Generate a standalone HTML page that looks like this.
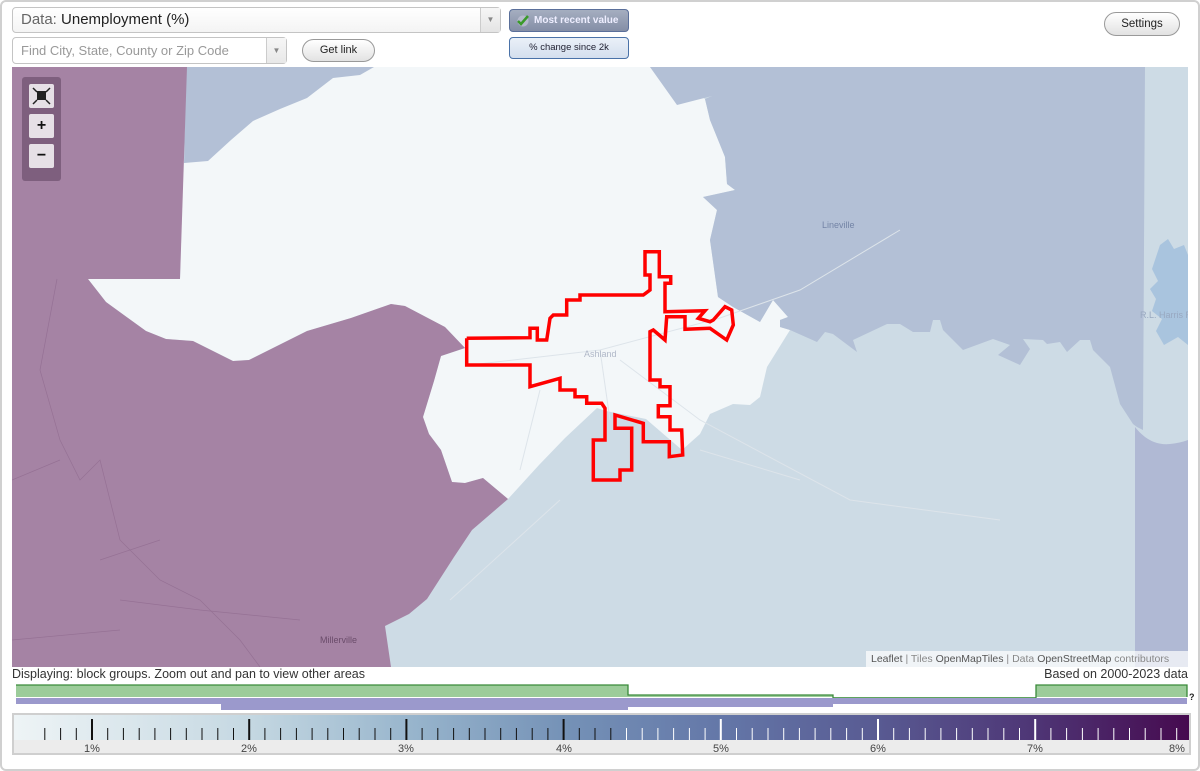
<!DOCTYPE html>
<html><head><meta charset="utf-8"><style>
*{box-sizing:border-box;margin:0;padding:0}
body{width:1200px;height:771px;background:#fff;font-family:"Liberation Sans",Arial,sans-serif;position:relative;overflow:hidden}
.frame{position:absolute;left:0;top:0;width:1200px;height:771px;border:2px solid #d0d0d0;border-radius:6px}
.sel{position:absolute;left:12px;top:7px;width:489px;height:26px;border:1px solid #c4c4c4;border-radius:4px;background:linear-gradient(#fff,#f4f4f4);font-size:15px;line-height:24px;padding-left:8px;color:#222}
.sel .l{color:#666}
.arr{position:absolute;right:0;top:0;width:20px;height:100%;border-left:1px solid #ccc;background:linear-gradient(#f6f6f6,#e4e4e4);color:#888;font-size:8px;text-align:center;line-height:24px}
.find{position:absolute;left:12px;top:37px;width:275px;height:27px;border:1px solid #c4c4c4;border-radius:4px;background:#fff;font-size:13px;color:#999;line-height:25px;padding-left:8px}
.btn{position:absolute;border:1px solid #999;border-radius:12px;background:linear-gradient(#fff,#e2e2e2);font-size:11px;text-align:center;color:#222}
.mr{position:absolute;left:509px;top:9px;width:120px;height:23px;border:1px solid #5a6f9a;border-radius:4px;background:linear-gradient(#a5aec0,#848ea6);color:#eef;font-size:10px;font-weight:bold;line-height:21px;padding-left:24px}
.pc{position:absolute;left:509px;top:37px;width:120px;height:22px;border:1px solid #4a72a8;border-radius:4px;background:linear-gradient(#eaf0f8,#d4dfee);color:#223;font-size:9.5px;line-height:20px;text-align:center}
.zp{position:absolute;left:22px;top:77px;width:39px;height:104px;background:rgba(110,80,110,.7);border-radius:3px}
.zb{position:absolute;left:7px;width:25px;height:24px;background:#e6e0e6;border-radius:2px;font-weight:bold;text-align:center;font-size:16px;line-height:23px;color:#111}
.attr{position:absolute;left:866px;top:651px;width:322px;height:16px;background:rgba(255,255,255,.7);font-size:10.5px;color:#888;line-height:16px;padding-left:5px}
.attr b{font-weight:normal;color:#555}
</style></head><body>
<div class="frame"></div>
<div class="sel"><span class="l">Data:</span> Unemployment (%)<div class="arr">▼</div></div>
<div class="find">Find City, State, County or Zip Code<div class="arr" style="background:linear-gradient(#f6f6f6,#e8e8e8);line-height:25px">▼</div></div>
<div class="btn" style="left:302px;top:39px;width:73px;height:23px;line-height:21px">Get link</div>
<div class="mr"><svg style="position:absolute;left:6px;top:4px" width="14" height="13" viewBox="0 0 14 13"><circle cx="7" cy="7" r="5.5" fill="#ccd" opacity=".6"/><path d="M2 7l3 3 7-8" stroke="#3a9a2a" stroke-width="2.5" fill="none"/></svg>Most recent value</div>
<div class="pc">% change since 2k</div>
<div class="btn" style="left:1104px;top:12px;width:76px;height:24px;line-height:22px;font-size:11.5px">Settings</div>

<svg style="position:absolute;left:12px;top:67px" width="1176" height="600" viewBox="12 67 1176 600">
<rect x="12" y="67" width="1176" height="600" fill="#cddbe5"/>
<polygon fill="#f3f7f9" points="186,67 650,67 705,99 710,120 725,157 727,184 735,190 703,197 717,210 710,240 718,297 733,307 760,322 773,300 788,317 780,320 780,327 790,330 767,367 760,397 750,405 733,404 710,414 700,434 682,450 646,419 606,411 597,408 565,438 539,465 508,499 483,478 465,483 452,482 441,450 429,434 423,417 434,381 441,356 465,348 445,327 405,306 391,304 351,318 307,331 249,360 233,361 193,341 166,339 146,331 106,302 88,279 180,279"/>
<polygon fill="#b3c0d6" points="186,67 374,67 360,75 333,78 307,98 280,109 253,121 231,140 208,161 184,163"/>
<polygon fill="#b3c0d6" points="650,67 1145,67 1143,430 1137,427 1133,424 1120,404 1110,367 1093,350 1090,340 1080,340 1067,352 1060,342 1047,344 1043,340 1023,339 1030,349 1020,365 998,355 1010,345 993,339 963,350 943,330 940,320 933,320 930,332 913,332 900,324 887,324 853,340 857,352 833,334 825,332 817,342 790,330 780,327 780,320 788,317 773,300 760,322 733,307 718,297 710,240 717,210 703,197 735,190 727,184 725,157 710,120 705,99 712,96 677,105"/>
<path d="M1135 427 Q1150 446 1170 444 Q1180 443 1188 440 V667 H1135Z" fill="#b0b9d4"/>
<path d="M1160 245 l8 -6 6 10 10 -4 4 10 v90 l-10 -8 -14 8 -8 -14 6 -12 -10 -8 4 -12 -6 -10 8 -8 -6 -12z" fill="#a9c4de"/>
<polygon fill="#a583a4" points="12,67 187,67 180,279 12,279"/>
<polygon fill="#a583a4" points="12,279 88,279 106,302 146,331 166,339 193,341 233,361 249,360 307,331 351,318 391,304 405,306 445,327 465,348 441,356 434,381 423,417 429,434 441,450 452,482 465,483 483,478 508,499 472,530 454,557 427,599 409,614 385,626 391,667 12,667"/>
<g stroke="#8f6a8e" stroke-width=".7" fill="none" opacity=".7">
<path d="M57 279 L40 370 60 440 80 480 100 460 120 540 160 580 200 600 240 640 260 667"/>
<path d="M12 480 L60 460 M100 560 L160 540 M120 600 L200 610 L300 620 M12 640 L120 630"/>
</g>
<g stroke="#dde4ea" stroke-width="1" fill="none">
<path d="M470 365 L600 350 720 318 800 290 900 230 M600 350 L610 420 M540 390 L520 470"/>
<path d="M620 360 L700 420 850 500 1000 520 M700 450 L800 480 M560 500 L450 600"/>
</g>
<polyline fill="none" stroke="#ff0000" stroke-width="3.5" points="466.7,338.3 530,337.7 530,328.3 537.3,328.3 537.3,340 546.7,340 550,318.3 553.3,315 566.7,315 566.7,300 580,300 580,295 643.3,295 650,290 650,275 645,275 645,251.7 659.3,251.7 659.3,276.7 670.7,276.7 670.7,283.3 665,283.3 665,311.7 705,310.7 698.3,318.3 710,321.7 713.3,320 725,306.7 731.7,310 733.3,325 726.7,340 710,328.3 685,329.3 685,316.7 666.7,316.7 665,340 653.3,330 650,331.7 650,380 660,380 660,386.7 670,386.7 670,405.7 658.3,405.7 658.3,416.7 670,416.7 670,430 681.7,430 682.7,455 669.3,456.7 669.3,441.7 643.3,441.7 643.3,423.3 615,415 615,428.3 631.7,428.3 631.7,470 620,470 620,480 593.3,480 593.3,440 605,440 605,408.3 601.7,403.3 586.7,403.3 586.7,396.7 575,396.7 575,390 560,390 560,378.3 530,386.7 530,365 466.7,365 466.7,338.3"/>
<g font-family="Liberation Sans,sans-serif" font-size="9">
<text x="584" y="357" fill="#b0b8c8">Ashland</text>
<text x="822" y="228" fill="#7484a6">Lineville</text>
<text x="320" y="643" fill="#6a4c6a">Millerville</text>
<text x="1140" y="318" fill="#98a8c0">R.L. Harris R</text>
</g>
</svg>
<div class="zp">
<div class="zb" style="top:7px"><svg width="25" height="24" viewBox="0 0 25 24"><rect x="8" y="7" width="9" height="9" fill="#222"/><path d="M4 4l4 4M21 4l-4 4M4 20l4-4M21 20l-4-4" stroke="#222" stroke-width="1.5"/></svg></div>
<div class="zb" style="top:37px">+</div>
<div class="zb" style="top:67px">−</div>
</div>
<div class="attr"><b>Leaflet</b> | Tiles <b>OpenMapTiles</b> | Data <b>OpenStreetMap</b> contributors</div>
<div style="position:absolute;left:12px;top:667px;font-size:12.5px;color:#333">Displaying: block groups. Zoom out and pan to view other areas</div>
<div style="position:absolute;right:12px;top:667px;font-size:12.5px;color:#333">Based on 2000-2023 data</div>
<svg style="position:absolute;left:0;top:680px" width="1200" height="32">
<path d="M16 5 H628 V15 H833 V18 H1036 V5 H1187 V17 H16Z" fill="#9ccc9a"/>
<path d="M16 5 H628 V15 H833 V18 H1036 V5 H1187 V17" stroke="#3a8a3a" fill="none" stroke-width="1.3"/>
<rect x="16" y="18" width="1171" height="6" fill="#9b99cc"/>
<rect x="221" y="24" width="407" height="6" fill="#9b99cc"/>
<rect x="628" y="24" width="205" height="3" fill="#9b99cc"/>
<text x="1189" y="20" font-size="9" font-weight="bold" fill="#222">?</text>
</svg>
<div style="position:absolute;left:12px;top:713px;width:1179px;height:42px;border:2px solid #cfcfcf;background:#ececec">
<div style="position:absolute;left:0;top:0;width:1175px;height:25px;background:linear-gradient(90deg,#eef4f6 0%,#c5d8e2 20%,#99b6cd 33.4%,#7592b7 46.8%,#6477a8 60.2%,#585a92 73.6%,#4e3575 87%,#460a4f 100%)"></div>
<svg style="position:absolute;left:0;top:0" width="1175" height="38">
<g id="t"></g>
<g font-size="11" fill="#444" font-family="Liberation Sans,sans-serif" text-anchor="middle">
<text x="78" y="37">1%</text><text x="235" y="37">2%</text><text x="392" y="37">3%</text><text x="550" y="37">4%</text><text x="707" y="37">5%</text><text x="864" y="37">6%</text><text x="1021" y="37">7%</text><text x="1163" y="37">8%</text>
</g>
</svg>
</div>
<script>
var g=document.getElementById('t'),s='';
for(var i=-3;i<=70;i++){var x=78+i*15.72;if(x<8||x>1172)continue;var maj=(i%10===0);var c=(i<34)?'#111':'#fff';
s+='<rect x="'+(x-(maj?1:0.5)).toFixed(1)+'" y="'+(maj?4:13)+'" width="'+(maj?2:1)+'" height="'+(maj?21:12)+'" fill="'+c+'"/>';}
g.innerHTML=s;
</script>
</body></html>
